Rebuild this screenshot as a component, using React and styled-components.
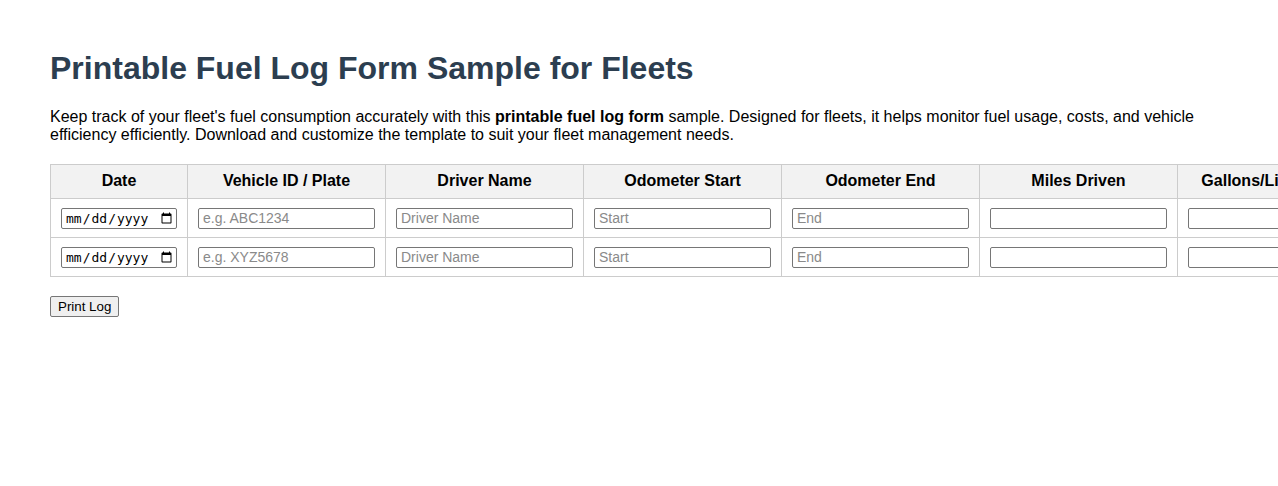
import React from "react";
import styled, { createGlobalStyle } from "styled-components";

const Global = createGlobalStyle`
  html, body { margin: 0; padding: 0; background: #fff; overflow: hidden; }
  body { font-family: "Liberation Sans", Arial, sans-serif; color: #000; }
`;

const Page = styled.div`
  padding: 29px 50px;
  width: 1178px;
`;

const Title = styled.h1`
  font-size: 32px;
  font-weight: bold;
  color: #2c3e50;
  margin: 21.44px 0 20.44px;
  line-height: normal;
`;

const Intro = styled.p`
  font-size: 16px;
  line-height: normal;
  margin: 0 0 20px;
`;

const Table = styled.table`
  border-collapse: collapse;
  table-layout: fixed;
  width: max-content;
`;

const Th = styled.th`
  border: 1px solid #ccc;
  background: #f2f2f2;
  font-size: 16px;
  font-weight: bold;
  padding: 7px 10px 8px;
  text-align: center;
  width: ${(p) => p.$w}px;
  white-space: nowrap;
`;

const Td = styled.td`
  border: 1px solid #ccc;
  padding: 9px 10px 8px;
  text-align: center;
  overflow: hidden;
`;

const TextInput = styled.input`
  box-sizing: border-box;
  width: 100%;
  height: 21px;
  font-family: "Liberation Sans", Arial, sans-serif;
  font-size: 14px;
  padding: 1px 4px;
  border: 1px solid #767676;
  border-radius: 2px;
  display: block;
  &::placeholder { color: #8a8a8a; }
`;

const DateInput = styled(TextInput)`
  width: 116px;
  min-width: 0;
  font-family: "DejaVu Sans Mono", "Liberation Mono", monospace;
  font-size: 13px;
  padding: 1px 3px;
  &::-webkit-calendar-picker-indicator {
    margin-inline-start: 0;
    padding: 0;
    margin-left: 0;
  }
  &::-webkit-datetime-edit { flex: 1; }
`;

const PrintButton = styled.button`
  margin-top: 19px;
  font-family: "Liberation Sans", Arial, sans-serif;
  font-size: 13.33px;
  line-height: 15px;
  padding: 2px 7px;
  background: #efefef;
  border: 1px solid #767676;
  border-radius: 2px;
  color: #000;
`;

const columns = [
  { label: "Date", w: 114 },
  { label: "Vehicle ID / Plate", w: 177 },
  { label: "Driver Name", w: 177 },
  { label: "Odometer Start", w: 177 },
  { label: "Odometer End", w: 177 },
  { label: "Miles Driven", w: 177 },
  { label: "Gallons/Liters Used", w: 177 },
  { label: "Cost", w: 177 },
  { label: "Fuel Station", w: 177 },
];

const rows = [
  { plate: "e.g. ABC1234" },
  { plate: "e.g. XYZ5678" },
];

export default function App() {
  return (
    <>
      <Global />
      <Page>
        <Title>Printable Fuel Log Form Sample for Fleets</Title>
        <Intro>
          Keep track of your fleet's fuel consumption accurately with this{" "}
          <strong>printable fuel log form</strong> sample. Designed for fleets, it
          helps monitor fuel usage, costs, and vehicle efficiency efficiently.
          Download and customize the template to suit your fleet management needs.
        </Intro>
        <Table>
          <thead>
            <tr>
              {columns.map((c) => (
                <Th key={c.label} $w={c.w}>{c.label}</Th>
              ))}
            </tr>
          </thead>
          <tbody>
            {rows.map((r, i) => (
              <tr key={i}>
                <Td><DateInput type="date" /></Td>
                <Td><TextInput placeholder={r.plate} /></Td>
                <Td><TextInput placeholder="Driver Name" /></Td>
                <Td><TextInput placeholder="Start" /></Td>
                <Td><TextInput placeholder="End" /></Td>
                <Td><TextInput /></Td>
                <Td><TextInput /></Td>
                <Td><TextInput /></Td>
                <Td><TextInput /></Td>
              </tr>
            ))}
          </tbody>
        </Table>
        <PrintButton>Print Log</PrintButton>
      </Page>
    </>
  );
}
